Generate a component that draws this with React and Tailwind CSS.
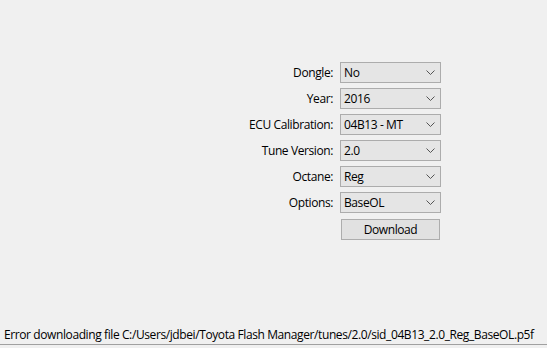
import React from "react";

const FIELDS = [
  { label: "Dongle:", value: "No" },
  { label: "Year:", value: "2016" },
  { label: "ECU Calibration:", value: "04B13 - MT" },
  { label: "Tune Version:", value: "2.0" },
  { label: "Octane:", value: "Reg" },
  { label: "Options:", value: "BaseOL" },
];

const Chevron = () => (
  <svg width="9" height="5" viewBox="0 0 9 5" className="text-[#555]">
    <path d="M0.5 0.5 L4.5 4.5 L8.5 0.5" fill="none" stroke="currentColor" strokeWidth="1" />
  </svg>
);

const Combo = ({ value }) => (
  <div className="h-[21px] w-[101px] flex items-center justify-between border border-[#acacac] bg-[#e5e5e5] pl-[3px] pr-[5px]">
    <span>{value}</span>
    <Chevron />
  </div>
);

export default function App() {
  return (
    <div
      className="w-[547px] h-[348px] bg-[#f0f0f0] flex flex-col text-[12px] tracking-[-0.4px] text-black overflow-hidden"
      style={{ fontFamily: '"Open Sans", "Noto Sans", sans-serif' }}
    >
      <div className="flex-1 pt-[62px] pl-[240px]">
        <div className="grid grid-cols-[93px_101px] gap-x-[7px] gap-y-[5px] items-center">
          {FIELDS.map((f) => (
            <React.Fragment key={f.label}>
              <div className="text-right leading-none">{f.label}</div>
              <Combo value={f.value} />
            </React.Fragment>
          ))}
          <div />
          <button className="mt-[1px] ml-[1px] h-[21px] w-[99px] border border-[#adadad] bg-[#e1e1e1] text-center">
            Download
          </button>
        </div>
      </div>
      <div className="h-[23px] flex flex-col">
        <div className="flex-1 pl-[4px] pt-[1px] leading-[18px] whitespace-nowrap">
          Error downloading file C:/Users/jdbei/Toyota Flash Manager/tunes/2.0/sid_04B13_2.0_Reg_BaseOL.p5f
        </div>
        <div className="h-[1px] bg-[#a0a0a0]" />
        <div className="h-[4px]" />
      </div>
    </div>
  );
}
